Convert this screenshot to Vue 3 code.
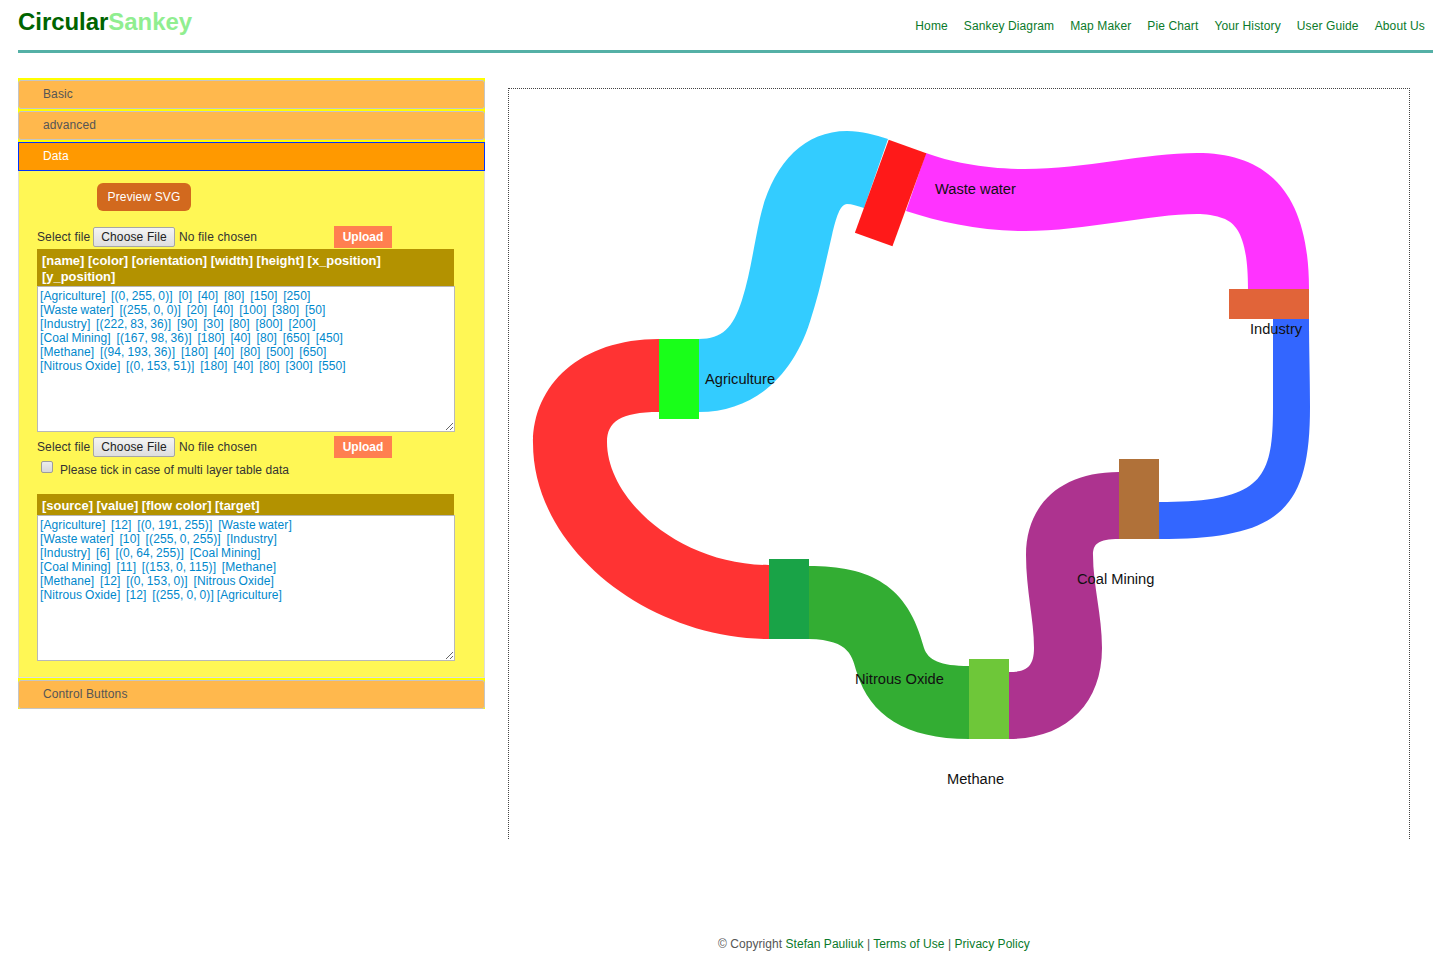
<template>
  <div class="page">
    <header class="top">
      <div class="logo">Circular<span>Sankey</span></div>
      <nav class="nav">
        <a v-for="item in navItems" :key="item" href="#">{{ item }}</a>
      </nav>
    </header>

    <main class="main">
      <aside class="accordion">
        <div class="acc-head">Basic</div>
        <div class="acc-head">advanced</div>
        <div class="acc-head active">Data</div>
        <div class="panel">
          <button class="preview">Preview SVG</button>

          <div class="file-row first">
            <label>Select file</label>
            <input type="file" class="file" />
            <button class="upload">Upload</button>
          </div>
          <div class="table-head">[name] [color] [orientation] [width] [height] [x_position] [y_position]</div>
          <textarea class="table-text" spellcheck="false" :value="nodeText"></textarea>

          <div class="file-row second">
            <label>Select file</label>
            <input type="file" class="file" />
            <button class="upload">Upload</button>
          </div>
          <div class="tick">
            <input type="checkbox" />
            <span>Please tick in case of multi layer table data</span>
          </div>

          <div class="table-head flows">[source] [value] [flow color] [target]</div>
          <textarea class="table-text" spellcheck="false" :value="flowText"></textarea>
        </div>
        <div class="acc-head">Control Buttons</div>
      </aside>

      <section class="canvas">
        <svg width="900" height="750" viewBox="509 89 900 750">
          <path
            v-for="flow in flows"
            :key="flow.color"
            :d="flow.d"
            :fill="flow.color"
            fill-opacity="0.8"
          />
          <rect
            v-for="node in nodes"
            :key="node.name"
            :x="node.x"
            :y="node.y"
            :width="node.w"
            :height="node.h"
            :fill="node.color"
            :transform="node.rotate"
            fill-opacity="0.9"
          />
          <text
            v-for="node in nodes"
            :key="node.name + '-label'"
            :x="node.lx"
            :y="node.ly"
            class="label"
          >{{ node.name }}</text>
        </svg>
      </section>
    </main>

    <footer class="foot">
      © Copyright <a href="#">Stefan Pauliuk</a> | <a href="#">Terms of Use</a> | <a href="#">Privacy Policy</a>
    </footer>
  </div>
</template>

<script setup>
const navItems = ['Home', 'Sankey Diagram', 'Map Maker', 'Pie Chart', 'Your History', 'User Guide', 'About Us']

const nodeText = `[Agriculture]  [(0, 255, 0)]  [0]  [40]  [80]  [150]  [250]
[Waste water]  [(255, 0, 0)]  [20]  [40]  [100]  [380]  [50]
[Industry]  [(222, 83, 36)]  [90]  [30]  [80]  [800]  [200]
[Coal Mining]  [(167, 98, 36)]  [180]  [40]  [80]  [650]  [450]
[Methane]  [(94, 193, 36)]  [180]  [40]  [80]  [500]  [650]
[Nitrous Oxide]  [(0, 153, 51)]  [180]  [40]  [80]  [300]  [550]`

const flowText = `[Agriculture]  [12]  [(0, 191, 255)]  [Waste water]
[Waste water]  [10]  [(255, 0, 255)]  [Industry]
[Industry]  [6]  [(0, 64, 255)]  [Coal Mining]
[Coal Mining]  [11]  [(153, 0, 115)]  [Methane]
[Methane]  [12]  [(0, 153, 0)]  [Nitrous Oxide]
[Nitrous Oxide]  [12]  [(255, 0, 0)] [Agriculture]`

const flows = [
  { color: 'rgb(0,191,255)', d: 'M699 339C722 339 733 328 742 300C750 275 753 250 760 218C772 165 803 131 847 131C862 131 875 135 888 139L864 208C857 206 852 204 847 204C840 204 836 218 832 235C825 265 820 290 812 315C795 375 755 412 699 412Z' },
  { color: 'rgb(255,0,255)', d: 'M926 153C950 162 985 169 1025 169C1085 169 1145 153 1197 153C1270 153 1309 195 1309 289L1248 289C1248 240 1238 225 1225 219C1215 215 1205 214 1197 214C1150 214 1085 231 1025 231C980 231 940 222 906 211Z' },
  { color: 'rgb(0,64,255)', d: 'M1273 319C1273 350 1273 380 1273 407C1273 480 1262 502 1159 502L1159 539C1280 539 1310 510 1310 407C1310 375 1309 350 1309 319Z' },
  { color: 'rgb(153,0,115)', d: 'M1119 472C1060 472 1026 505 1026 555C1026 590 1034 620 1034 648C1034 668 1025 672 1009 672L1009 739C1065 739 1102 705 1102 648C1102 615 1093 585 1093 555C1093 544 1098 539 1119 539Z' },
  { color: 'rgb(0,153,0)', d: 'M809 566C870 566 908 585 924 648C928 660 940 666 969 666L969 739C905 739 870 715 857 673C852 657 851 640 809 639Z' },
  { color: 'rgb(255,0,0)', d: 'M659 339C580 339 533 385 533 443C533 550 650 639 769 639L769 565C680 565 607 500 607 442C607 422 620 412 659 412Z' },
]

const nodes = [
  { name: 'Agriculture', x: 659, y: 339, w: 40, h: 80, color: 'rgb(0,255,0)', lx: 705, ly: 384 },
  { name: 'Waste water', x: 870.6, y: 143.5, w: 40, h: 99, color: 'rgb(255,0,0)', rotate: 'rotate(20 890.6 193)', lx: 935, ly: 194 },
  { name: 'Industry', x: 1229, y: 289, w: 80, h: 30, color: 'rgb(222,83,36)', lx: 1250, ly: 334 },
  { name: 'Coal Mining', x: 1119, y: 459, w: 40, h: 80, color: 'rgb(167,98,36)', lx: 1077, ly: 584 },
  { name: 'Methane', x: 969, y: 659, w: 40, h: 80, color: 'rgb(94,193,36)', lx: 947, ly: 784 },
  { name: 'Nitrous Oxide', x: 769, y: 559, w: 40, h: 80, color: 'rgb(0,153,51)', lx: 855, ly: 684 },
]
</script>

<style>
html, body {
  background: #fff;
}
</style>

<style scoped>
.page {
  width: 1453px;
  height: 964px;
  padding: 0 20px 0 18px;
  box-sizing: border-box;
  font-family: "Liberation Sans", Arial, sans-serif;
  font-size: 12px;
  letter-spacing: 0.12px;
  color: #333;
}
.top {
  height: 50px;
  display: flex;
  justify-content: space-between;
  border-bottom: 3px solid #54b0a6;
}
.logo {
  font-size: 24px;
  font-weight: bold;
  line-height: 28px;
  padding-top: 8px;
  letter-spacing: -0.05px;
  color: #006400;
}
.logo span {
  color: #90ee90;
}
.nav {
  display: flex;
  gap: 16px;
  padding: 19px 8px 0 0;
  line-height: 14px;
}
.nav a {
  color: #0a7a2a;
  text-decoration: none;
}
.main {
  display: flex;
  align-items: flex-start;
  margin-top: 25px;
}
.accordion {
  width: 467px;
  flex: none;
  background: #ffff00;
  padding-top: 2px;
}
.acc-head {
  height: 27px;
  line-height: 27px;
  margin-bottom: 2px;
  padding-left: 24px;
  border: 1px solid #c5c5c5;
  border-radius: 3px;
  background: #ffb84d;
  color: #555;
}
.acc-head:last-child {
  margin-bottom: 0;
}
.acc-head.active {
  margin-bottom: 0;
  border-color: #0033ff;
  border-radius: 0;
  background: #ff9900;
  color: #fff;
}
.panel {
  height: 507px;
  margin-bottom: 2px;
  padding: 12px 0 0 18px;
  box-sizing: border-box;
  background: #fff755;
  border: 1px solid #ddd;
  border-top: 0;
}
.preview {
  display: block;
  width: 94px;
  height: 28px;
  margin-left: 60px;
  padding: 0;
  border: 0;
  border-radius: 6px;
  background: #d2691e;
  color: #fff;
  font: 12px "Liberation Sans", Arial, sans-serif;
  letter-spacing: 0.14px;
}
.file-row {
  display: flex;
  align-items: center;
  height: 22px;
}
.file-row.first {
  margin-top: 15px;
}
.file-row.second {
  margin-top: 4px;
}
.file-row label {
  width: 53px;
  flex: none;
  white-space: nowrap;
}
.file {
  width: 241px;
  margin-left: 3px;
  font: 12px "Liberation Sans", Arial, sans-serif;
  letter-spacing: 0.14px;
  color: #333;
}
.file::file-selector-button {
  width: 82px;
  height: 20px;
  margin-right: 4px;
  padding: 0;
  border: 1px solid #a6a6a6;
  border-radius: 2px;
  background: linear-gradient(#f4f4f4, #dedede);
  color: #222;
  font: inherit;
  letter-spacing: inherit;
}
.upload {
  width: 58px;
  height: 22px;
  padding: 0;
  border: 0;
  background: #ff7f50;
  color: #fff;
  font: bold 12px "Liberation Sans", Arial, sans-serif;
}
.table-head {
  width: 417px;
  margin-top: 1px;
  padding: 4px 5px 1px;
  box-sizing: border-box;
  background: #b39200;
  color: #fff;
  font-size: 12.93px;
  font-weight: bold;
  line-height: 16px;
  letter-spacing: 0;
}
.table-head.flows {
  margin-top: 14px;
}
.table-text {
  display: block;
  width: 418px;
  height: 146px;
  margin: 0;
  padding: 2px;
  box-sizing: border-box;
  border: 1px solid #b8b8b8;
  background: #fff;
  color: #0088cc;
  font: 12px/14px "Liberation Sans", Arial, sans-serif;
  letter-spacing: 0.1px;
  word-spacing: -0.55px;
  outline: none;
}
.tick {
  display: flex;
  align-items: center;
  height: 20px;
  margin-top: 2px;
  padding-left: 4px;
  letter-spacing: 0.05px;
}
.tick input {
  appearance: none;
  width: 12px;
  height: 12px;
  margin: -6px 7px 0 0;
  box-sizing: border-box;
  border: 1px solid #9c9c9c;
  border-radius: 2px;
  background: linear-gradient(#ececec, #d8d8d8);
}
.canvas {
  margin: 10px 0 0 23px;
  border: 1px dotted #444;
  border-bottom: 0;
  line-height: 0;
}
.canvas svg {
  display: block;
}
.label {
  font-size: 14.67px;
  letter-spacing: 0;
  fill: #111;
}
.foot {
  margin-top: 98px;
  padding-left: 700px;
  line-height: 14px;
  letter-spacing: 0.05px;
  color: #555;
}
.foot a {
  color: #0a7a2a;
  text-decoration: none;
}
</style>
